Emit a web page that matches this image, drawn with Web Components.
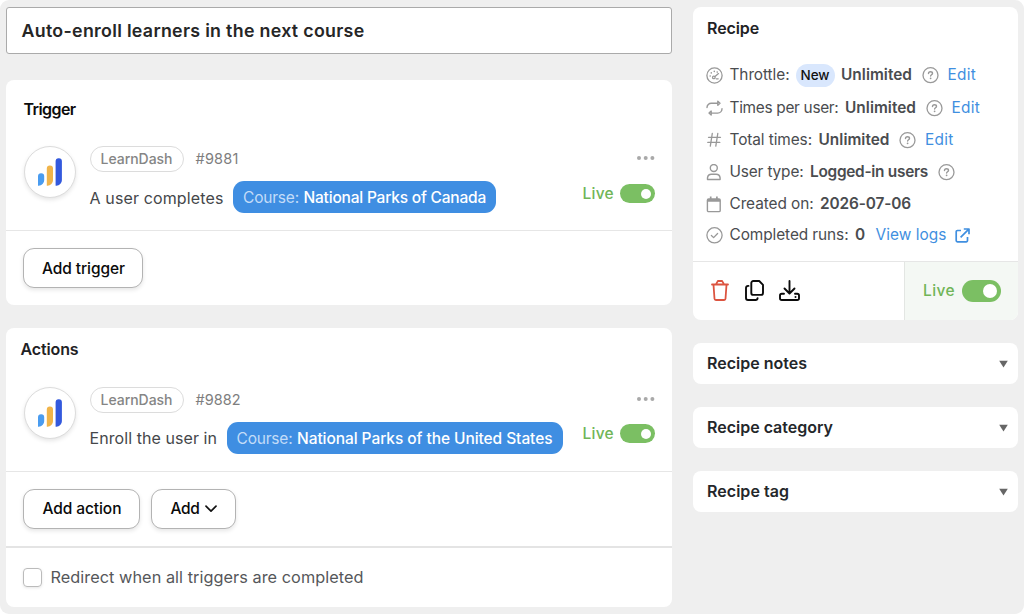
<!DOCTYPE html>
<html lang="en">
<head>
<meta charset="utf-8">
<title>Recipe editor</title>
<style>
html,body{margin:0;padding:0;background:#fff}
body{width:1024px;height:614px;overflow:hidden;font-family:Inter,"Liberation Sans",sans-serif;font-size:15.5px;color:#45474a}
</style>
</head>
<body>
<recipe-editor></recipe-editor>
<script>
const define = (name, html, setup) => {
  const t = document.createElement('template');
  t.innerHTML = html;
  customElements.define(name, class extends HTMLElement {
    connectedCallback() {
      if (this.shadowRoot) return;
      this.attachShadow({mode: 'open'}).appendChild(t.content.cloneNode(true));
      if (setup) setup(this, this.shadowRoot);
    }
  });
};

/* Single line label, tracked to its design width */
define('ui-text', `<style>
:host{display:inline-block;white-space:nowrap;flex:none;line-height:20px}
</style><span><slot></slot></span>`, (el, root) => {
  const w = parseFloat(el.getAttribute('w'));
  if (!w) return;
  const span = root.querySelector('span');
  const n = el.textContent.length;
  const natural = span.getBoundingClientRect().width;
  span.style.letterSpacing = ((w - natural) / n).toFixed(3) + 'px';
  el.style.width = w + 'px';
});

const ICONS = {
  gauge: ['0 0 17 17', '<g fill="none" stroke="#999" stroke-width="1.3" stroke-linecap="round"><circle cx="8.5" cy="8.5" r="7.6"/><circle cx="7.8" cy="10.4" r="1.3"/><path d="M9 9.500l3.500-2.900M10.300 11.800h1.900"/></g><g fill="#999"><circle cx="4.2" cy="9" r=".8"/><circle cx="5.3" cy="5.9" r=".8"/><circle cx="8.3" cy="4.4" r=".8"/><circle cx="11.2" cy="5.1" r=".8"/></g>'],
  repeat: ['0 0 17 17', '<g fill="none" stroke="#999" stroke-width="1.4" stroke-linecap="round" stroke-linejoin="round"><path d="M1 7.600A4.300 4.300 0 0 1 5.300 3.300H11.600M16 8.800a4.300 4.300 0 0 1-4.300 4.300H5.400"/><path d="M11.800 1.300v4L14 3.300zM5.200 11.100v4L3 13.100z"/></g>'],
  hash: ['0 0 17 17', '<path d="M6.300 1.400L4.300 14.200M11.800 1.400L9.800 14.200M2.500 5.300h12M1.800 10.400h12" fill="none" stroke="#999" stroke-width="1.3" stroke-linecap="round"/>'],
  user: ['0 0 17 17', '<g fill="none" stroke="#999" stroke-width="1.4" stroke-linejoin="round"><circle cx="7.8" cy="4" r="3.5"/><path d="M1.500 15.500v-1.700a4 4 0 0 1 4-3.500h4.600a4 4 0 0 1 4 3.500v1.700z"/></g>'],
  calendar: ['0 0 17 17', '<g fill="none" stroke="#999" stroke-width="1.400"><rect x="1.400" y="3" width="12.8" height="12.600" rx="1.200"/><path d="M4.700 .6v3M10.900 .6v3" stroke-width="1.700"/><path d="M1.500 4.400h12.600" stroke-width="2.600"/></g>'],
  check: ['0 0 17 17', '<g fill="none" stroke="#999" stroke-width="1.300" stroke-linecap="round" stroke-linejoin="round"><circle cx="8.500" cy="8.300" r="7.600"/><path d="M5.400 8.500l2.200 2.100 4-4.100"/></g>'],
  help: ['0 0 17 17', '<circle cx="8.500" cy="8.200" r="7.500" fill="none" stroke="#999" stroke-width="1.300"/><path d="M6.500 6.500c0-1.100 .9-1.800 2-1.800s2 .7 2 1.700c0 1.300-1.900 1.500-1.900 2.700" fill="none" stroke="#999" stroke-width="1.400" stroke-linecap="round"/><circle cx="8.600" cy="11.300" r=".9" fill="#999"/>'],
  external: ['0 0 15 15', '<path d="M6 2.500H2.400A1.200 1.200 0 0 0 1.200 3.700v8.900a1.200 1.200 0 0 0 1.200 1.200h8.900a1.200 1.200 0 0 0 1.200-1.200V9M8.800 1h5.200v5.200M13.800 1.200L5.600 9.400" fill="none" stroke="#3f8fe0" stroke-width="1.700" stroke-linejoin="round"/>'],
  trash: ['0 0 18 21', '<g fill="none" stroke="#dc5440" stroke-width="1.800" stroke-linecap="round" stroke-linejoin="round"><path d="M1 4.500h16M2.500 4.700l1 14a1.400 1.400 0 0 0 1.400 1.300h8.200a1.400 1.400 0 0 0 1.400-1.300l1-14M5 4.300l1.300-2.500a1.300 1.300 0 0 1 1.200-.8h3a1.300 1.300 0 0 1 1.200 .8L13 4.300"/></g>'],
  copy: ['0 0 19 21', '<g fill="none" stroke="#0b0b0b" stroke-width="1.900" stroke-linecap="round" stroke-linejoin="round"><path d="M8.300 1h5.900l3.800 3.800v8.100a2 2 0 0 1-2 2H8.300a2 2 0 0 1-2-2V3a2 2 0 0 1 2-2z"/><path d="M3.500 5.900H3a2 2 0 0 0-2 2V18a2 2 0 0 0 2 2h7.600a2 2 0 0 0 2-1.800"/></g>'],
  download: ['0 0 21 21', '<g fill="none" stroke="#0b0b0b" stroke-width="1.900" stroke-linecap="round" stroke-linejoin="round"><path d="M10.500 1v12M5.500 8.500l5 5 5-5"/><path d="M5 13.700H2.800A1.800 1.800 0 0 0 1 15.500v2.700A1.800 1.800 0 0 0 2.800 20h15.400a1.800 1.800 0 0 0 1.800-1.800v-2.700a1.800 1.800 0 0 0-1.800-1.800H16"/></g><circle cx="16.500" cy="16.900" r="1" fill="#0b0b0b"/>'],
  chevron: ['0 0 12 8', '<path d="M1 1.200l5 5 5-5" fill="none" stroke="#111" stroke-width="1.700" stroke-linecap="round" stroke-linejoin="round"/>'],
  caret: ['0 0 9 8', '<path d="M.2 .7h8.600L4.500 7.500z" fill="#666"/>'],
  dots: ['0 0 18 4', '<g fill="#a9a9a9"><circle cx="2" cy="2" r="2"/><circle cx="8.700" cy="2" r="2"/><circle cx="15.400" cy="2" r="2"/></g>'],
  bars: ['0 0 24 28', '<path d="M0 27.700v-9.400a3 3 0 0 1 3-3h.2a3 3 0 0 1 3 3v3.900a5.500 5.500 0 0 1-5.500 5.500z" fill="#4a9cf0"/><path d="M8.800 27.700V10.600a3 3 0 0 1 3-3h.2a3 3 0 0 1 3 3v11.600a5.500 5.500 0 0 1-5.500 5.500z" fill="#f0b44a"/><path d="M17.600 27.700V3.300a3 3 0 0 1 3-3h.3a3 3 0 0 1 3 3v18.900a5.500 5.500 0 0 1-5.500 5.500z" fill="#3359dd"/>']
};
define('ui-icon', `<style>:host{display:block;flex:none}svg{display:block}</style>`, (el, root) => {
  const [box, body] = ICONS[el.getAttribute('name')];
  const [, , w, h] = box.split(' ');
  const holder = document.createElement('div');
  holder.innerHTML = `<svg viewBox="${box}" width="${w}" height="${h}">${body}</svg>`;
  root.appendChild(holder.firstChild);
});

define('ui-card', `<style>
:host{display:flex;flex-direction:column;background:#fff;border-radius:8px;box-sizing:border-box;overflow:hidden}
</style><slot></slot>`);

define('ui-button', `<style>
:host{display:flex;align-items:center;justify-content:center;box-sizing:border-box;height:40px;border:1.5px solid #b3b3b3;border-radius:11px;background:#fff;color:#0a0a0a;font-weight:500;gap:6px;box-shadow:0 2px 4px rgba(0,0,0,.1)}
:host([tall]) ::slotted(ui-text),:host([tall]){padding-top:1px}
</style><slot></slot>`);

define('ui-toggle', `<style>
:host{display:flex;align-items:center;gap:6px;color:#70b558;font-weight:500}
i{display:flex;align-items:center;justify-content:flex-end;box-sizing:border-box;width:35px;height:19px;border-radius:10px;background:#7bbf63;padding-right:4px}
i::after{content:"";width:10px;height:10px;border-radius:50%;background:#fff}
:host([large]){gap:7px}
:host([large]) i{width:39px;height:22px;border-radius:11px}
:host([large]) i::after{width:14px;height:14px}
</style><slot></slot><i></i>`);

define('recipe-step', `<style>
:host{display:grid;grid-template-columns:52px 1fr auto;column-gap:14px;padding:0 17px 0 17.500px;height:67px}
.logo{width:50px;height:50px;border:1px solid #dcdcdc;border-radius:50%;box-shadow:0 2px 4px rgba(0,0,0,.1);display:grid;place-items:center;background:#fff}
.meta{display:flex;align-items:center;gap:12px;height:26px;color:#7e7e7e;font-size:14.500px}
.tag{box-sizing:border-box;height:26px;width:94px;border:1.500px solid #dcdcdc;border-radius:13px;display:flex;align-items:center;justify-content:center;font-weight:500;font-size:14px;color:#858585}
.line{display:flex;align-items:center;gap:9.500px;height:32px;margin-top:9px;font-size:16px}
.side{display:flex;flex-direction:column;align-items:flex-end}
.side ui-icon{margin-top:10px}
.side ui-toggle{margin-top:24px;height:19px}
:host([raised]) .side ui-toggle{margin-top:23px}
</style>
<div class="logo"><ui-icon name="bars"></ui-icon></div>
<div><div class="meta"><span class="tag"><ui-text w="72">LearnDash</ui-text></span><slot name="id"></slot></div>
<div class="line"><slot></slot></div></div>
<div class="side"><ui-icon name="dots"></ui-icon><ui-toggle><ui-text w="31.5">Live</ui-text></ui-toggle></div>`);

define('field-pill', `<style>
:host{display:flex;align-items:center;gap:4.500px;box-sizing:border-box;height:32px;padding:0 10px;border-radius:11px;background:#3f8ee2;color:#fff;font-size:15.500px;font-weight:500}
::slotted(ui-text){padding-top:1px}
::slotted([slot=label]){color:#c3dcf8;font-weight:400}
</style><slot name="label"></slot><slot></slot>`);

define('info-row', `<style>
:host{display:flex;align-items:center;height:32px;padding-left:13px;font-size:15.400px;color:#4a4c4f}
.i{width:23.500px;flex:none}
</style><div class="i"></div><slot></slot>`, (el, root) => {
  const ic = document.createElement('ui-icon');
  ic.setAttribute('name', el.getAttribute('icon'));
  root.querySelector('.i').appendChild(ic);
});

define('side-panel', `<style>
:host{display:flex;align-items:center;justify-content:space-between;height:41px;background:#fff;border-radius:8px;padding:0 10px 0 14px;color:#24272a;font-weight:600;font-size:16px}
::slotted(ui-text){margin-top:-1px}
</style><slot></slot><ui-icon name="caret"></ui-icon>`);

define('recipe-editor', `<style>
:host{display:grid;grid-template-columns:666px 325px;column-gap:21px;box-sizing:border-box;width:1024px;height:614px;padding:7px 6px;background:#efefef;border-radius:9px;align-items:start}
.title{box-sizing:border-box;height:47px;border:1.500px solid #aaa;border-radius:3px;background:#fff;display:flex;align-items:center;padding-left:14.500px;font-size:17.800px;font-weight:600;color:#262626}
.trigger{margin-top:26px;height:225px}
.actions{margin-top:23px;height:279px}
.h{display:flex;align-items:center;font-weight:600;font-size:16px;color:#1f2225;flex:none}
.trigger .h{height:57px;padding-left:17.500px;margin-bottom:9px;color:#0c0c0c}
.actions .h{height:42px;padding-left:14.500px;margin-bottom:17px}
.trigger recipe-step,.actions recipe-step{height:84px}
.btns{display:flex;gap:11px;padding:17px 0 0 17.400px;border-top:1px solid #e6e6e6}
.btns.a{height:57px;flex:none}
.redirect{display:flex;align-items:center;gap:8.500px;padding:0 17px;border-top:2px solid #e4e4e4;height:58px;flex:none;font-size:16.300px;color:#55575a}
.box{box-sizing:border-box;width:19px;height:19px;border:1.500px solid #bbb;border-radius:4px;box-shadow:0 1px 3px rgba(0,0,0,.1)}
.recipe{height:313px}
.recipe .h{height:42px;padding-left:14px;margin-bottom:10px}
info-row[icon=repeat]{margin-top:1px}
info-row[icon=check]{margin-top:-1px}
ui-text.v{font-weight:600;margin-left:6.500px}
.q{margin-left:9.500px}
.e{margin-left:9px;color:#3f8fe0}
.new{display:flex;align-items:center;justify-content:center;width:39px;height:23px;border-radius:12px;background:#d9e7fd;color:#111;font-size:13.500px;font-weight:500;margin-left:6px}
.foot{display:flex;height:58px;border-top:1px solid #e6e6e6;margin-top:auto;flex:none}
.tools{flex:1;display:flex;align-items:center;padding:0 0 2px 18px;gap:15.500px}
.live{box-sizing:border-box;width:114px;background:#f4f8f4;border-left:1px solid #e3e6e3;display:flex;align-items:center;padding-left:18px}
.panels{display:grid;gap:23px;margin-top:23px}
</style>
<main>
  <div class="title"><ui-text w="343">Auto-enroll learners in the next course</ui-text></div>
  <ui-card class="trigger">
    <div class="h"><ui-text w="52">Trigger</ui-text></div>
    <recipe-step><ui-text slot="id" w="43">#9881</ui-text><ui-text w="134" style="padding-top:1px">A user completes</ui-text><field-pill><ui-text slot="label" w="56">Course:</ui-text><ui-text w="182.500">National Parks of Canada</ui-text></field-pill></recipe-step>
    <div class="btns"><ui-button tall style="width:120px"><ui-text w="83">Add trigger</ui-text></ui-button></div>
  </ui-card>
  <ui-card class="actions">
    <div class="h"><ui-text w="58">Actions</ui-text></div>
    <recipe-step raised><ui-text slot="id" w="45">#9882</ui-text><ui-text w="127.500">Enroll the user in</ui-text><field-pill><ui-text slot="label" w="56">Course:</ui-text><ui-text w="255.500">National Parks of the United States</ui-text></field-pill></recipe-step>
    <div class="btns a"><ui-button style="width:117px"><ui-text w="79">Add action</ui-text></ui-button><ui-button style="width:85px"><ui-text w="29">Add</ui-text><ui-icon name="chevron"></ui-icon></ui-button></div>
    <div class="redirect"><span class="box"></span><ui-text w="313">Redirect when all triggers are completed</ui-text></div>
  </ui-card>
</main>
<aside>
  <ui-card class="recipe">
    <div class="h"><ui-text w="52">Recipe</ui-text></div>
    <info-row icon="gauge"><ui-text w="60">Throttle:</ui-text><span class="new"><ui-text w="29">New</ui-text></span><ui-text class="v" w="71">Unlimited</ui-text><ui-icon class="q" name="help"></ui-icon><ui-text class="e" w="28.500">Edit</ui-text></info-row>
    <info-row icon="repeat"><ui-text w="109">Times per user:</ui-text><ui-text class="v" w="71">Unlimited</ui-text><ui-icon class="q" name="help"></ui-icon><ui-text class="e" w="28.500">Edit</ui-text></info-row>
    <info-row icon="hash"><ui-text w="82.500">Total times:</ui-text><ui-text class="v" w="71">Unlimited</ui-text><ui-icon class="q" name="help"></ui-icon><ui-text class="e" w="28.500">Edit</ui-text></info-row>
    <info-row icon="user"><ui-text w="74">User type:</ui-text><ui-text class="v" w="118">Logged-in users</ui-text><ui-icon class="q" name="help"></ui-icon></info-row>
    <info-row icon="calendar"><ui-text w="84">Created on:</ui-text><ui-text class="v" w="91">2026-07-06</ui-text></info-row>
    <info-row icon="check"><ui-text w="119">Completed runs:</ui-text><ui-text class="v" w="10.500">0</ui-text><ui-text class="e" style="margin-left:10px" w="71">View logs</ui-text><ui-icon style="margin-left:8px" name="external"></ui-icon></info-row>
    <div class="foot"><div class="tools"><ui-icon name="trash"></ui-icon><ui-icon name="copy"></ui-icon><ui-icon name="download"></ui-icon></div><div class="live"><ui-toggle large><ui-text w="32">Live</ui-text></ui-toggle></div></div>
  </ui-card>
  <div class="panels"><side-panel><ui-text w="100">Recipe notes</ui-text></side-panel><side-panel><ui-text w="126">Recipe category</ui-text></side-panel><side-panel><ui-text w="82">Recipe tag</ui-text></side-panel></div>
</aside>`);
</script>
</body>
</html>
